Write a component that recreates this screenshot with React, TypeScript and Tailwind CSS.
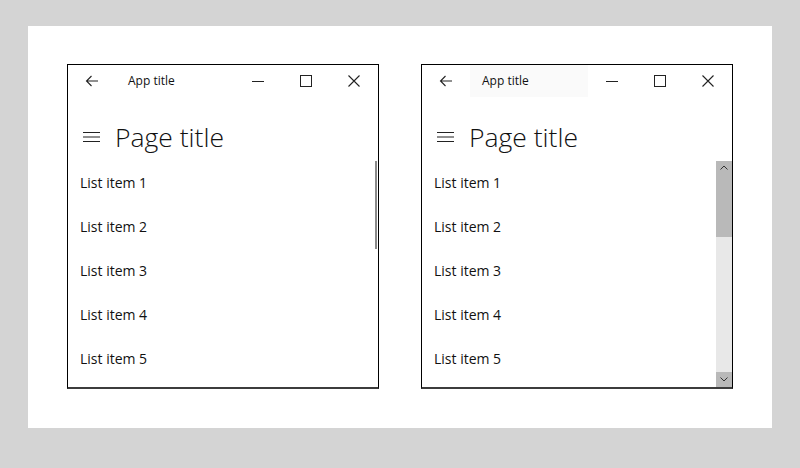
import React from "react";

const font = { fontFamily: '"Segoe UI", "Open Sans", "Noto Sans", sans-serif' };

function Win({ variant }: { variant: "thin" | "full" }) {
  const items = ["List item 1", "List item 2", "List item 3", "List item 4", "List item 5"];
  return (
    <div className="relative flex h-[325px] w-[312px] shrink-0 flex-col border border-black border-b-2 border-b-[#3c3c3c] bg-white text-[#111]">
      {/* title bar */}
      <div className="flex h-[32px] shrink-0 items-center">
        <div className="flex h-full w-12 shrink-0 items-center justify-center">
          <svg width="14" height="12" viewBox="0 0 14 12" fill="none" stroke="#222" strokeWidth="1.1">
            <path d="M13 6H1.5M6.5 1L1.5 6l5 5" />
          </svg>
        </div>
        <div
          className={`flex h-full min-w-0 flex-1 items-center whitespace-nowrap pl-3 text-[12px] ${
            variant === "full" ? "bg-[#fafafa]" : ""
          }`}
        >
          App title
        </div>
        <div className="flex h-full shrink-0">
          <div className="flex h-full w-12 items-center justify-center">
            <svg width="12" height="12" viewBox="0 0 12 12" fill="none" stroke="#222" strokeWidth="1">
              <path d="M0 6.5H12" />
            </svg>
          </div>
          <div className="flex h-full w-12 items-center justify-center">
            <svg width="12" height="12" viewBox="0 0 12 12" fill="none" stroke="#222" strokeWidth="1">
              <rect x="0.5" y="0.5" width="11" height="11" />
            </svg>
          </div>
          <div className="flex h-full w-12 items-center justify-center">
            <svg width="12" height="12" viewBox="0 0 12 12" fill="none" stroke="#222" strokeWidth="1.1">
              <path d="M0.5 0.5l11 11M11.5 0.5l-11 11" />
            </svg>
          </div>
        </div>
      </div>
      {/* header */}
      <div className="flex h-[64px] shrink-0 items-center pt-4">
        <div className="flex w-[47px] justify-end pr-[14px]">
          <svg width="18" height="12" viewBox="0 0 18 12" fill="none" stroke="#222" strokeWidth="1.1">
            <path d="M0 1.5H17M0 6H17M0 10.5H17" />
          </svg>
        </div>
        <div className="whitespace-nowrap text-[26.5px] font-light leading-none text-[#111]">Page title</div>
      </div>
      {/* list */}
      <div className="flex flex-1">
        <div className="flex flex-1 flex-col">
          {items.map((t) => (
            <div key={t} className="flex h-[44px] items-center pb-[2px] pl-3 text-[14px]">
              {t}
            </div>
          ))}
        </div>
        {variant === "thin" ? (
          <div className="w-[16px]">
            <div className="ml-[13px] h-[88px] w-[2px] bg-[#8a8a8a]" />
          </div>
        ) : (
          <div className="flex w-[16px] flex-col bg-[#e8e8e8]">
            <div className="flex h-[76px] flex-col items-center bg-[#b9b9b9] pt-[4px]">
              <svg width="8" height="5" viewBox="0 0 8 5" fill="none" stroke="#333" strokeWidth="1">
                <path d="M0.5 4.5L4 1l3.5 3.5" />
              </svg>
            </div>
            <div className="flex-1" />
            <div className="flex h-[15px] items-center justify-center bg-[#b9b9b9]">
              <svg width="8" height="5" viewBox="0 0 8 5" fill="none" stroke="#333" strokeWidth="1">
                <path d="M0.5 0.5L4 4l3.5-3.5" />
              </svg>
            </div>
          </div>
        )}
      </div>
    </div>
  );
}

export default function App() {
  return (
    <div className="h-[468px] w-[800px] bg-[#d4d4d4] pl-[28px] pt-[26px]" style={font}>
      <div className="flex h-[402px] w-[744px] gap-[42px] bg-white pl-[39px] pt-[38px]">
        <Win variant="thin" />
        <Win variant="full" />
      </div>
    </div>
  );
}
